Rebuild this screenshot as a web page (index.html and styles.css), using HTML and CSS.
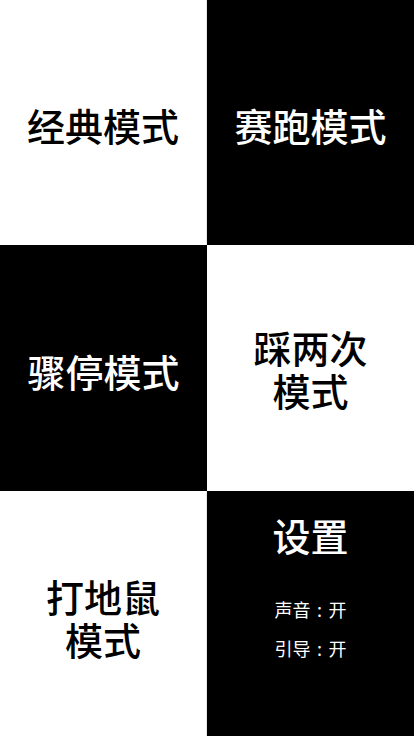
FILE: index.html
```html
<!DOCTYPE html>
<html lang="zh">
<head>
<meta charset="utf-8">
<link rel="stylesheet" href="styles.css">
</head>
<body>
<div class="board">
  <div class="cell white edge"><div class="title">经典模式</div></div>
  <div class="cell black"><div class="title">赛跑模式</div></div>
  <div class="cell black"><div class="title">骤停模式</div></div>
  <div class="cell white"><div class="title two"><div class="line">踩两次</div><div class="line">模式</div></div></div>
  <div class="cell white edge"><div class="title two low"><div class="line">打地鼠</div><div class="line">模式</div></div></div>
  <div class="cell black settings">
    <div class="title">设置</div>
    <div class="opts">
      <div class="opt">声音<span class="colon">:</span>开</div>
      <div class="opt">引导<span class="colon">:</span>开</div>
    </div>
  </div>
</div>
</body>
</html>
```
FILE: styles.css
```css
html, body {
  margin: 0;
  padding: 0;
  width: 414px;
  height: 736px;
  overflow: hidden;
  font-family: "Noto Sans CJK SC", "Noto Sans", sans-serif;
}
.board {
  display: grid;
  grid-template-columns: 207px 207px;
  grid-template-rows: 245px 246px 245px;
  width: 414px;
  height: 736px;
}
.cell {
  display: flex;
  align-items: center;
  justify-content: center;
  box-sizing: border-box;
}
.white { background: #fff; color: #000; }
.black { background: #000; color: #fff; }
.edge { border-right: 1px solid #e6e6e6; }
.title {
  font-size: 38px;
  font-weight: 500;
  line-height: 43px;
  text-align: center;
  margin-top: 4px;
}
.title.two { margin-top: 0; }
.title.low { margin-top: 6px; }
.line { height: 43px; }
.settings {
  flex-direction: column;
  justify-content: flex-start;
  padding-top: 22px;
}
.settings .title { margin-top: 0; }
.opts {
  margin-top: 41px;
  display: flex;
  flex-direction: column;
  gap: 15px;
}
.opt {
  font-size: 18px;
  line-height: 24px;
  text-align: center;
}
.colon {
  display: inline-block;
  width: 18px;
  text-align: center;
}
```
